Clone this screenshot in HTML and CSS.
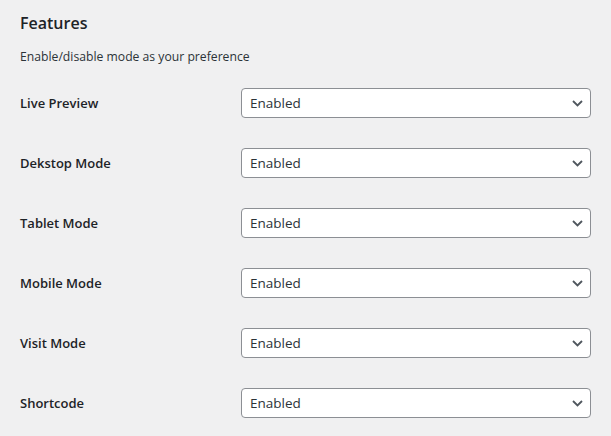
FILE: index.html
```html
<!DOCTYPE html>
<html>
<head>
<meta charset="utf-8">
<link rel="stylesheet" href="styles.css">
</head>
<body>
<div class="wrap">
  <h2 class="title">Features</h2>
  <p class="desc">Enable/disable mode as your preference</p>
  <div class="rows">
    <div class="row"><label class="label">Live Preview</label><div class="select"><span>Enabled</span><svg class="chev" width="11" height="7" viewBox="0 0 11 7"><path d="M1 1 L5.5 5.5 L10 1" fill="none" stroke="#50575e" stroke-width="1.8"/></svg></div></div>
    <div class="row"><label class="label">Dekstop Mode</label><div class="select"><span>Enabled</span><svg class="chev" width="11" height="7" viewBox="0 0 11 7"><path d="M1 1 L5.5 5.5 L10 1" fill="none" stroke="#50575e" stroke-width="1.8"/></svg></div></div>
    <div class="row"><label class="label">Tablet Mode</label><div class="select"><span>Enabled</span><svg class="chev" width="11" height="7" viewBox="0 0 11 7"><path d="M1 1 L5.5 5.5 L10 1" fill="none" stroke="#50575e" stroke-width="1.8"/></svg></div></div>
    <div class="row"><label class="label">Mobile Mode</label><div class="select"><span>Enabled</span><svg class="chev" width="11" height="7" viewBox="0 0 11 7"><path d="M1 1 L5.5 5.5 L10 1" fill="none" stroke="#50575e" stroke-width="1.8"/></svg></div></div>
    <div class="row"><label class="label">Visit Mode</label><div class="select"><span>Enabled</span><svg class="chev" width="11" height="7" viewBox="0 0 11 7"><path d="M1 1 L5.5 5.5 L10 1" fill="none" stroke="#50575e" stroke-width="1.8"/></svg></div></div>
    <div class="row"><label class="label">Shortcode</label><div class="select"><span>Enabled</span><svg class="chev" width="11" height="7" viewBox="0 0 11 7"><path d="M1 1 L5.5 5.5 L10 1" fill="none" stroke="#50575e" stroke-width="1.8"/></svg></div></div>
  </div>
</div>
</body>
</html>
```
FILE: styles.css
```css
html, body {
  margin: 0;
  padding: 0;
  background: #f0f0f1;
}
body {
  font-family: "Open Sans", "Noto Sans", sans-serif;
  color: #1d2327;
}
.wrap {
  padding: 12px 20px 0 20px;
}
.title {
  font-size: 16px;
  font-weight: 600;
  line-height: 22px;
  margin: 0;
}
.desc {
  font-size: 12.2px;
  line-height: 20px;
  margin: 13px 0 0 0;
  color: #2c3338;
}
.rows {
  display: flex;
  flex-direction: column;
  gap: 30px;
  margin-top: 21px;
}
.row {
  display: flex;
  align-items: center;
}
.label {
  width: 221px;
  font-size: 13px;
  font-weight: 600;
  line-height: 20px;
}
.select {
  box-sizing: border-box;
  width: 350px;
  height: 30px;
  border: 1px solid #8c8f94;
  border-radius: 4px;
  background: #fff;
  display: flex;
  align-items: center;
  justify-content: space-between;
  padding: 0 7px 0 8px;
  font-size: 13.5px;
  color: #2c3338;
}
.chev {
  display: block;
}
```
